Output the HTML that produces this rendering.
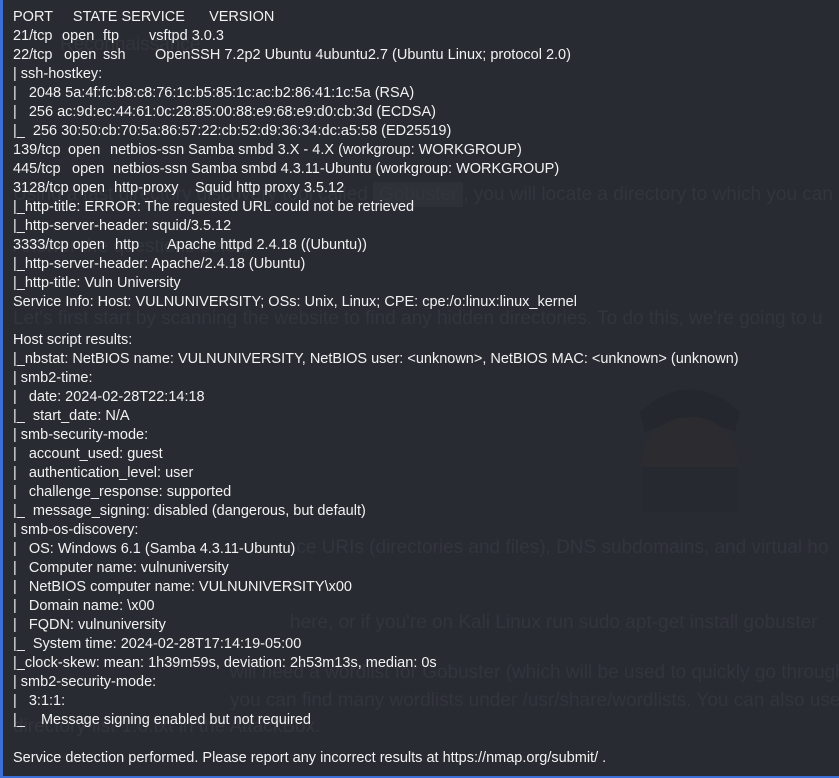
<!DOCTYPE html>
<html><head><meta charset="utf-8"><style>
html,body{margin:0;padding:0;width:839px;height:778px;overflow:hidden}
body{background:#292b33;font-family:"Liberation Sans","DejaVu Sans",sans-serif;}
#w{position:relative;width:839px;height:778px;overflow:hidden}
.bl{position:absolute;left:0;top:0;width:3px;height:778px;background:#3d6fd8}
.bb{position:absolute;left:0;top:776px;width:839px;height:2px;background:#3d6fd8}
.bg{position:absolute;color:#33353d;font-size:19px;white-space:nowrap}
.l{position:absolute;left:13px;color:#f2f2f2;font-size:14.5px;line-height:19px;white-space:pre;height:19px}
.c{position:absolute;top:0}
</style></head><body><div id="w">
<div class="bg" style="left:60px;top:34px;">Reconnaissance</div>
<div class="bg" style="left:13px;top:184px;">Using a fast directory discovery tool called <span style="background:#2f3139;padding:2px 6px">Gobuster</span>, you will locate a directory to which you can</div>
<div class="bg" style="left:13px;top:236px;">Answer the questions below</div>
<div class="bg" style="left:13px;top:308px;">Let's first start by scanning the website to find any hidden directories. To do this, we're going to u</div>
<div class="bg" style="left:290px;top:537px;">rce URIs (directories and files), DNS subdomains, and virtual ho</div>
<div class="bg" style="left:290px;top:612px;">here, or if you're on Kali Linux run sudo apt-get install gobuster</div>
<div class="bg" style="left:230px;top:662px;">will need a wordlist for Gobuster (which will be used to quickly go through the</div>
<div class="bg" style="left:230px;top:690px;">you can find many wordlists under /usr/share/wordlists. You can also use the wo</div>
<div class="bg" style="left:13px;top:716px;">directory-list-1.0.txt in the AttackBox.</div>
<svg style="position:absolute;left:630px;top:372px" width="120" height="140"><path d="M10 40 Q60 -5 110 40 L105 60 Q60 40 15 60Z" fill="#25272e"/><ellipse cx="60" cy="90" rx="48" ry="45" fill="#2c2b30"/><rect x="12" y="95" width="96" height="45" fill="#272930"/></svg>
<div class="bl"></div><div class="bb"></div>
<div class="l" style="top:8px">PORT     STATE SERVICE      VERSION</div>
<div class="l" style="top:27px"><span class="c" style="left:0">21/tcp</span><span class="c" style="left:49px">open</span><span class="c" style="left:90px">ftp</span><span class="c" style="left:136px">vsftpd 3.0.3</span></div>
<div class="l" style="top:46px"><span class="c" style="left:0">22/tcp</span><span class="c" style="left:51px">open</span><span class="c" style="left:90px">ssh</span><span class="c" style="left:142px">OpenSSH 7.2p2 Ubuntu 4ubuntu2.7 (Ubuntu Linux; protocol 2.0)</span></div>
<div class="l" style="top:65px">| ssh-hostkey: </div>
<div class="l" style="top:84px">|   2048 5a:4f:fc:b8:c8:76:1c:b5:85:1c:ac:b2:86:41:1c:5a (RSA)</div>
<div class="l" style="top:103px">|   256 ac:9d:ec:44:61:0c:28:85:00:88:e9:68:e9:d0:cb:3d (ECDSA)</div>
<div class="l" style="top:122px">|_  256 30:50:cb:70:5a:86:57:22:cb:52:d9:36:34:dc:a5:58 (ED25519)</div>
<div class="l" style="top:141px"><span class="c" style="left:0">139/tcp</span><span class="c" style="left:55px">open</span><span class="c" style="left:97px">netbios-ssn Samba smbd 3.X - 4.X (workgroup: WORKGROUP)</span></div>
<div class="l" style="top:160px"><span class="c" style="left:0">445/tcp</span><span class="c" style="left:59px">open</span><span class="c" style="left:100px">netbios-ssn Samba smbd 4.3.11-Ubuntu (workgroup: WORKGROUP)</span></div>
<div class="l" style="top:179px"><span class="c" style="left:0">3128/tcp open</span><span class="c" style="left:101px">http-proxy</span><span class="c" style="left:182px">Squid http proxy 3.5.12</span></div>
<div class="l" style="top:198px">|_http-title: ERROR: The requested URL could not be retrieved</div>
<div class="l" style="top:217px">|_http-server-header: squid/3.5.12</div>
<div class="l" style="top:236px"><span class="c" style="left:0">3333/tcp open</span><span class="c" style="left:102px">http</span><span class="c" style="left:154px">Apache httpd 2.4.18 ((Ubuntu))</span></div>
<div class="l" style="top:255px">|_http-server-header: Apache/2.4.18 (Ubuntu)</div>
<div class="l" style="top:274px">|_http-title: Vuln University</div>
<div class="l" style="top:293px">Service Info: Host: VULNUNIVERSITY; OSs: Unix, Linux; CPE: cpe:/o:linux:linux_kernel</div>
<div class="l" style="top:331px">Host script results:</div>
<div class="l" style="top:350px">|_nbstat: NetBIOS name: VULNUNIVERSITY, NetBIOS user: &lt;unknown&gt;, NetBIOS MAC: &lt;unknown&gt; (unknown)</div>
<div class="l" style="top:369px">| smb2-time: </div>
<div class="l" style="top:388px">|   date: 2024-02-28T22:14:18</div>
<div class="l" style="top:407px">|_  start_date: N/A</div>
<div class="l" style="top:426px">| smb-security-mode: </div>
<div class="l" style="top:445px">|   account_used: guest</div>
<div class="l" style="top:464px">|   authentication_level: user</div>
<div class="l" style="top:483px">|   challenge_response: supported</div>
<div class="l" style="top:502px">|_  message_signing: disabled (dangerous, but default)</div>
<div class="l" style="top:521px">| smb-os-discovery: </div>
<div class="l" style="top:540px">|   OS: Windows 6.1 (Samba 4.3.11-Ubuntu)</div>
<div class="l" style="top:559px">|   Computer name: vulnuniversity</div>
<div class="l" style="top:578px">|   NetBIOS computer name: VULNUNIVERSITY\x00</div>
<div class="l" style="top:597px">|   Domain name: \x00</div>
<div class="l" style="top:616px">|   FQDN: vulnuniversity</div>
<div class="l" style="top:635px">|_  System time: 2024-02-28T17:14:19-05:00</div>
<div class="l" style="top:654px">|_clock-skew: mean: 1h39m59s, deviation: 2h53m13s, median: 0s</div>
<div class="l" style="top:673px">| smb2-security-mode: </div>
<div class="l" style="top:692px">|   3:1:1: </div>
<div class="l" style="top:711px">|_    Message signing enabled but not required</div>
<div class="l" style="top:749px">Service detection performed. Please report any incorrect results at https://nmap.org/submit/ .</div>
</div></body></html>
